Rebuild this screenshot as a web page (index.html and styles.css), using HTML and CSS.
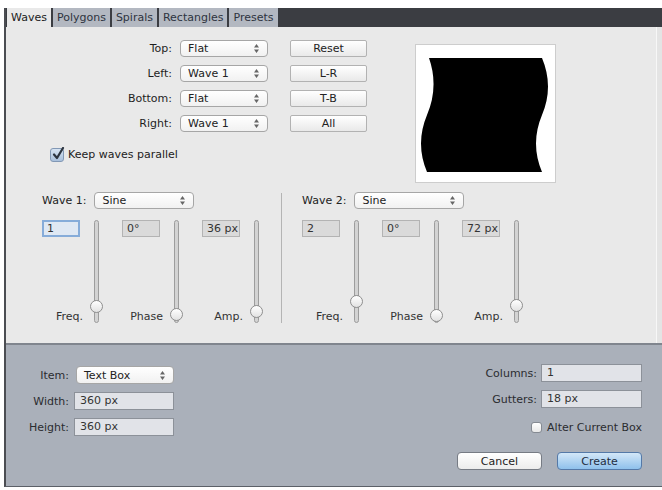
FILE: index.html
```html
<!DOCTYPE html>
<html lang="en">
<head>
  <meta charset="UTF-8">
  <meta name="viewport" content="width=device-width, initial-scale=1.0">
  <title>Waves</title>
  <link rel="stylesheet" href="styles.css">
</head>
<body>
  <div class="window">
    <div class="tabs">
      <span class="tab active">Waves</span>
      <span class="tab">Polygons</span>
      <span class="tab">Spirals</span>
      <span class="tab">Rectangles</span>
      <span class="tab">Presets</span>
    </div>

    <div class="panel">
      <div class="top">
        <div class="left">
          <div class="edges">
            <label>Top:</label>
            <div class="select"><span>Flat</span><svg width="5" height="9" viewBox="0 0 5 9"><path d="M0 3.5 2.5 0 5 3.5Z M0 5.5 2.5 9 5 5.5Z" fill="#666"/></svg></div>
            <button class="btn">Reset</button>

            <label>Left:</label>
            <div class="select"><span>Wave 1</span><svg width="5" height="9" viewBox="0 0 5 9"><path d="M0 3.5 2.5 0 5 3.5Z M0 5.5 2.5 9 5 5.5Z" fill="#666"/></svg></div>
            <button class="btn">L-R</button>

            <label>Bottom:</label>
            <div class="select"><span>Flat</span><svg width="5" height="9" viewBox="0 0 5 9"><path d="M0 3.5 2.5 0 5 3.5Z M0 5.5 2.5 9 5 5.5Z" fill="#666"/></svg></div>
            <button class="btn">T-B</button>

            <label>Right:</label>
            <div class="select"><span>Wave 1</span><svg width="5" height="9" viewBox="0 0 5 9"><path d="M0 3.5 2.5 0 5 3.5Z M0 5.5 2.5 9 5 5.5Z" fill="#666"/></svg></div>
            <button class="btn">All</button>
          </div>

          <label class="check">
            <span class="checkbox checked"><svg width="14" height="14" viewBox="0 0 14 14"><path d="M3 7.5 6 11 12 1" fill="none" stroke="#2c3440" stroke-width="2.2" stroke-linecap="round" stroke-linejoin="round"/></svg></span>
            Keep waves parallel
          </label>
        </div>

        <div class="preview">
          <svg width="139" height="137" viewBox="1 1 139 137">
            <path d="M14 14 L127 14 Q139 42.5 127 71 Q115 99.5 127 128 L12 128 Q0 99.5 12 71 Q24 42.5 14 14 Z" fill="#000"/>
          </svg>
        </div>
      </div>

      <div class="waves">
        <div class="wave">
          <div class="wave-head">
            <label>Wave 1:</label>
            <div class="select wide"><span>Sine</span><svg width="5" height="9" viewBox="0 0 5 9"><path d="M0 3.5 2.5 0 5 3.5Z M0 5.5 2.5 9 5 5.5Z" fill="#666"/></svg></div>
          </div>
          <div class="controls">
            <div class="control">
              <div class="value focus">1</div>
              <div class="slider"><span class="knob" style="bottom: 9px"></span></div>
              <span class="name">Freq.</span>
            </div>
            <div class="control">
              <div class="value">0°</div>
              <div class="slider"><span class="knob" style="bottom: 1px"></span></div>
              <span class="name">Phase</span>
            </div>
            <div class="control">
              <div class="value">36 px</div>
              <div class="slider"><span class="knob" style="bottom: 4px"></span></div>
              <span class="name">Amp.</span>
            </div>
          </div>
        </div>

        <div class="divider"></div>

        <div class="wave">
          <div class="wave-head">
            <label>Wave 2:</label>
            <div class="select wider"><span>Sine</span><svg width="5" height="9" viewBox="0 0 5 9"><path d="M0 3.5 2.5 0 5 3.5Z M0 5.5 2.5 9 5 5.5Z" fill="#666"/></svg></div>
          </div>
          <div class="controls">
            <div class="control">
              <div class="value">2</div>
              <div class="slider"><span class="knob" style="bottom: 14px"></span></div>
              <span class="name">Freq.</span>
            </div>
            <div class="control">
              <div class="value">0°</div>
              <div class="slider"><span class="knob" style="bottom: 0px"></span></div>
              <span class="name">Phase</span>
            </div>
            <div class="control">
              <div class="value">72 px</div>
              <div class="slider"><span class="knob" style="bottom: 10px"></span></div>
              <span class="name">Amp.</span>
            </div>
          </div>
        </div>
      </div>
    </div>

    <div class="footer">
      <div class="sizes">
        <label>Item:</label>
        <div class="select light"><span>Text Box</span><svg width="5" height="9" viewBox="0 0 5 9"><path d="M0 3.5 2.5 0 5 3.5Z M0 5.5 2.5 9 5 5.5Z" fill="#666"/></svg></div>
        <label>Width:</label>
        <div class="field">360 px</div>
        <label>Height:</label>
        <div class="field">360 px</div>
      </div>

      <div class="columns">
        <div class="col-grid">
          <label>Columns:</label>
          <div class="field">1</div>
          <label>Gutters:</label>
          <div class="field">18 px</div>
        </div>
        <label class="alter"><span class="checkbox plain"></span>Alter Current Box</label>
        <div class="actions">
          <button class="action">Cancel</button>
          <button class="action primary">Create</button>
        </div>
      </div>
    </div>
  </div>
</body>
</html>
```

FILE: styles.css
```css
body {
  margin: 0;
  background: #fff;
  font-family: "DejaVu Sans", sans-serif;
  font-size: 11px;
  color: #222;
}

.window {
  margin: 8px 0 0 4px;
  border-left: 2px solid #4b4d52;
  border-bottom: 1px solid #5c6068;
}

/* Onglets */
.tabs {
  display: flex;
  gap: 2px;
  height: 19px;
  padding-left: 1px;
  background: #3b3d42;
}

.tab {
  padding: 0 4px;
  line-height: 19px;
  background: #b3b8c1;
  color: #2e3440;
}

.tab.active {
  background: #e9e9e9;
  color: #222;
}

/* Panneau principal */
.panel {
  padding: 13px 0 20px;
  background: #e9e9e9;
  box-shadow: inset -5px 0 0 #e4e4e4, inset -6px 0 0 #f7f7f7;
}

.top {
  display: flex;
  align-items: flex-start;
}

.edges {
  display: grid;
  grid-template-columns: 166px 88px 91px;
  column-gap: 8px;
  row-gap: 8px;
  align-items: center;
}

.edges label {
  text-align: right;
  color: #1e1e1e;
}

.select {
  display: flex;
  align-items: center;
  justify-content: space-between;
  height: 17px;
  padding: 0 8px 0 7px;
  box-sizing: border-box;
  background: linear-gradient(#ffffff, #f1f1f1);
  border: 1px solid #a6a6a6;
  border-radius: 4px;
  color: #222;
}

.select.wide {
  width: 100px;
}

.select.wider {
  width: 110px;
}

.btn {
  justify-self: end;
  width: 77px;
  height: 17px;
  padding: 0;
  font: inherit;
  color: #222;
  background: linear-gradient(#ffffff, #e9e9e9);
  border: 1px solid #b2b2b2;
  border-radius: 2px;
}

.check {
  display: flex;
  align-items: center;
  gap: 4px;
  height: 15px;
  margin-top: 15px;
  padding-left: 44px;
}

.checkbox {
  display: inline-block;
  box-sizing: border-box;
}

.checkbox.checked {
  width: 14px;
  height: 14px;
  background: linear-gradient(#d6e3f2, #a9c0dc);
  border: 1px solid #8298b5;
  border-radius: 3px;
}

.checkbox.checked svg {
  display: block;
  margin: -2px 0 0 0;
}

.preview {
  width: 141px;
  height: 139px;
  margin: 4px 0 0 48px;
  box-sizing: border-box;
  background: #fff;
  border: 1px solid #cdcdcd;
}

.preview svg {
  display: block;
}

/* Ondes */
.waves {
  display: flex;
  margin-top: 9px;
  padding-left: 36px;
}

.wave-head {
  display: flex;
  align-items: center;
  gap: 8px;
  height: 17px;
}

.controls {
  display: flex;
  gap: 10px;
  margin-top: 11px;
}

.control {
  display: grid;
  grid-template-columns: 38px 32px;
  grid-template-rows: 17px 1fr auto;
  height: 103px;
}

.value {
  grid-column: 1;
  grid-row: 1;
  padding-left: 4px;
  line-height: 15px;
  overflow: hidden;
  white-space: nowrap;
  background: #dadada;
  border: 1px solid #b3b3b3;
  color: #333;
}

.value.focus {
  background: #dfe8f3;
  border: 2px solid #86acd9;
  line-height: 13px;
  padding-left: 3px;
}

.slider {
  grid-column: 2;
  grid-row: 1 / 4;
  justify-self: center;
  position: relative;
  width: 5px;
  box-sizing: border-box;
  background: #d3d3d3;
  border: 1px solid #9d9d9d;
  border-radius: 3px;
}

.knob {
  position: absolute;
  left: 50%;
  width: 13px;
  height: 13px;
  margin-left: -6.5px;
  box-sizing: border-box;
  border: 1px solid #8e8e8e;
  border-radius: 50%;
  background: linear-gradient(#ffffff, #e2e2e2);
}

.name {
  grid-column: 1;
  grid-row: 3;
  justify-self: end;
  margin-right: -3px;
  line-height: 13px;
  color: #333;
}

.divider {
  width: 1px;
  margin: 1px 20px 0 9px;
  background: #b4b4b4;
}

/* Bas de la fenêtre */
.footer {
  display: flex;
  justify-content: space-between;
  padding: 19px 20px 16px 0;
  background: #aab0ba;
  border-top: 2px solid #80858e;
}

.footer label {
  color: #2a2c30;
}

.sizes {
  display: grid;
  grid-template-columns: 63px 100px;
  column-gap: 5px;
  row-gap: 8px;
  align-content: start;
  align-items: center;
  margin-top: 2px;
}

.sizes label,
.col-grid label {
  text-align: right;
}

.field {
  height: 18px;
  padding-left: 5px;
  box-sizing: border-box;
  line-height: 16px;
  background: #e1e3e8;
  border: 1px solid #8c9199;
  color: #333;
}

.select.light {
  height: 18px;
  margin-left: 2px;
  width: 98px;
}

.columns {
  display: flex;
  flex-direction: column;
  align-items: flex-end;
}

.col-grid {
  display: grid;
  grid-template-columns: auto 101px;
  column-gap: 4px;
  row-gap: 8px;
  align-items: center;
}

.alter {
  display: flex;
  align-items: center;
  gap: 5px;
  height: 11px;
  margin-top: 14px;
}

.checkbox.plain {
  width: 11px;
  height: 11px;
  background: linear-gradient(#ffffff, #e8e8e8);
  border: 1px solid #858a92;
  border-radius: 3px;
}

.actions {
  display: flex;
  gap: 15px;
  margin-top: 19px;
}

.action {
  width: 85px;
  height: 18px;
  padding: 0;
  font: inherit;
  color: #222;
  background: linear-gradient(#ffffff, #ececec);
  border: 1px solid #767b84;
  border-radius: 4px;
}

.action.primary {
  background: linear-gradient(#d3e7f8, #8fc1ec);
  border-color: #5479a8;
  color: #1f2d40;
}
```
